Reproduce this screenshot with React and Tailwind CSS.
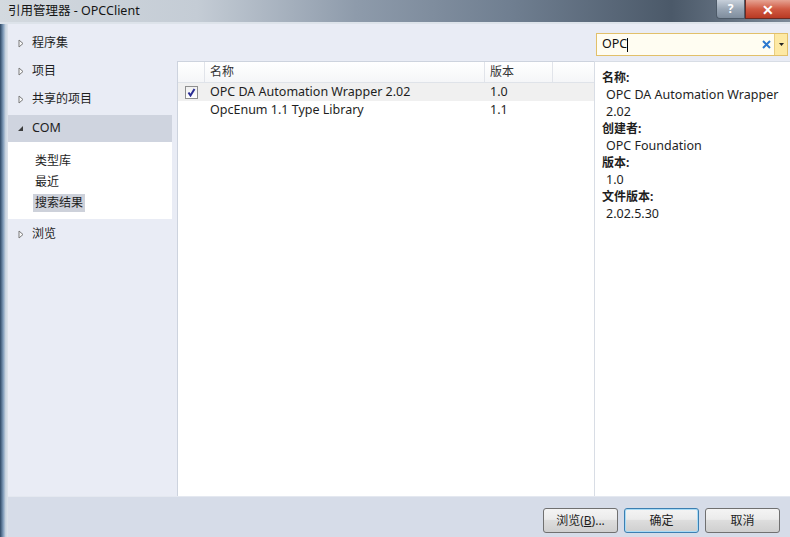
import React from 'react';

const font = "font-['Noto_Sans','Noto_Sans_CJK_SC',sans-serif]";

function Arrow() {
  return (
    <svg width="6" height="9" viewBox="0 0 6 9" className="shrink-0">
      <path d="M1 1 L5 4.5 L1 8 Z" fill="#fafafa" stroke="#7a7a7a" strokeWidth="1" />
    </svg>
  );
}

function NavItem({ label }) {
  return (
    <div className="h-[28px] flex items-center gap-[8px] pl-[10px] text-[12px] text-[#1e1e1e]">
      <Arrow />
      <span>{label}</span>
    </div>
  );
}

function Btn({ children, primary }) {
  return (
    <button
      className={`w-[75px] h-[25px] rounded-[3px] border text-[12px] text-[#1e1e1e] bg-[linear-gradient(#f4f4f4,#ebebeb_45%,#dddddd_50%,#cfcfcf)] ${primary ? 'border-[#3c7fb1] shadow-[inset_0_0_0_1px_#a8dbf6]' : 'border-[#707070]'}`}
    >
      {children}
    </button>
  );
}

export default function App() {
  const details = [
    ['名称:', ['OPC DA Automation Wrapper', '2.02']],
    ['创建者:', ['OPC Foundation']],
    ['版本:', ['1.0']],
    ['文件版本:', ['2.02.5.30']],
  ];

  return (
    <div className={`w-[790px] h-[537px] flex flex-col overflow-hidden ${font}`}>
      {/* title bar */}
      <div className="h-[22px] shrink-0 flex items-start bg-[linear-gradient(90deg,#d3d9df_0%,#c4ccd5_25%,#8e9bab_45%,#6f7e90_65%,#4b5969_85%,#7d8a99_100%)]">
        <span className="pl-[8px] pt-[2px] text-[12.5px] text-[#151515]">引用管理器 - OPCClient</span>
        <div className="ml-auto flex h-[19px]">
          <div className="w-[29px] flex items-center justify-center rounded-bl-[4px] border border-t-0 border-[#4d5a68] bg-[linear-gradient(#c7d0da,#9aa7b6_50%,#7f8d9d)] text-[12px] font-bold text-white">?</div>
          <div className="w-[45px] flex items-center justify-center border border-t-0 border-r-0 border-[#6b2a22] bg-[linear-gradient(#e6a393,#d05a43_50%,#b93a24)] text-[14px] font-bold text-white">✕</div>
        </div>
      </div>
      <div className="h-[2px] shrink-0 bg-[#dde3ea]" />

      <div className="flex-1 flex min-h-0">
        {/* left frame */}
        <div className="w-[8px] shrink-0 bg-[linear-gradient(90deg,#2e4865,#7f9bb9_40%,#c9d4e0_70%,#dfe4ec)]" />

        <div className="flex-1 flex flex-col min-w-0">
          <div className="flex-1 flex min-h-0 bg-[#e9ecf5]">
            {/* nav */}
            <div className="w-[164px] shrink-0 pt-[5px]">
              <NavItem label="程序集" />
              <NavItem label="项目" />
              <NavItem label="共享的项目" />
              <div className="mt-[2px] h-[27px] flex items-center gap-[8px] pl-[9px] bg-[#cfd4df] text-[12px] text-[#1e1e1e]">
                <svg width="7" height="7" viewBox="0 0 7 7" className="shrink-0">
                  <path d="M6 1 L6 6 L1 6 Z" fill="#3c3c3c" />
                </svg>
                <span className="text-[12.5px]">COM</span>
              </div>
              <div className="bg-white pt-[8px] pb-[6px] pl-[25px] text-[12px] text-[#1e1e1e]">
                <div className="h-[21px] flex items-center"><span className="px-[2px]">类型库</span></div>
                <div className="h-[21px] flex items-center"><span className="px-[2px]">最近</span></div>
                <div className="h-[21px] flex items-center"><span className="px-[2px] bg-[#cdd1da] leading-[18px]">搜索结果</span></div>
              </div>
              <div className="pt-[1px]">
                <NavItem label="浏览" />
              </div>
            </div>

            <div className="w-[5px] shrink-0" />

            {/* right area */}
            <div className="flex-1 flex flex-col min-w-0">
              <div className="h-[37px] shrink-0 flex items-start justify-end pt-[9px] pr-[2px]">
                <div className="w-[192px] h-[23px] flex border border-[#e2c06a] bg-[#fffdf2]">
                  <div className="flex-1 flex items-center pl-[5px] text-[12.5px] text-[#111]">
                    OPC<span className="w-px h-[14px] bg-black" />
                  </div>
                  <div className="w-[16px] flex items-center justify-center">
                    <svg width="9" height="9" viewBox="0 0 9 9">
                      <path d="M1 1 L8 8 M8 1 L1 8" stroke="#2c78cf" strokeWidth="2" />
                    </svg>
                  </div>
                  <div className="w-[13px] flex items-center justify-center border-l border-[#e8cd82] bg-[#fde9a4]">
                    <svg width="5" height="3" viewBox="0 0 5 3">
                      <path d="M0 0 L5 0 L2.5 3 Z" fill="#222" />
                    </svg>
                  </div>
                </div>
              </div>

              <div className="flex-1 flex min-h-0">
                {/* results list */}
                <div className="w-[417px] shrink-0 bg-white border-l border-t border-[#cdd3de]">
                  <div className="h-[21px] flex text-[12px] text-[#333] bg-[linear-gradient(#ffffff,#f5f6f8)] border-b border-[#dfe3e9]">
                    <div className="w-[27px] border-r border-[#e1e4ea]" />
                    <div className="w-[280px] pl-[5px] flex items-center border-r border-[#e1e4ea]">名称</div>
                    <div className="w-[68px] pl-[5px] flex items-center border-r border-[#e1e4ea]">版本</div>
                    <div className="flex-1" />
                  </div>
                  <div className="h-[18px] flex items-center bg-[#f0f0f0] text-[12.5px] text-[#1e1e1e]">
                    <div className="w-[27px] flex justify-center">
                      <div className="w-[13px] h-[13px] border border-[#8e8f8f] bg-[linear-gradient(#f0f0f0,#ffffff)] flex items-center justify-center">
                        <svg width="9" height="9" viewBox="0 0 9 9">
                          <path d="M1.5 4.5 L3.5 7.5 L7.5 1" fill="none" stroke="#2a2d94" strokeWidth="2" />
                        </svg>
                      </div>
                    </div>
                    <div className="w-[280px] pl-[5px] pt-[1px]">OPC DA Automation Wrapper 2.02</div>
                    <div className="pl-[5px] pt-[1px]">1.0</div>
                  </div>
                  <div className="h-[18px] flex items-center text-[12.5px] text-[#1e1e1e]">
                    <div className="w-[27px]" />
                    <div className="w-[280px] pl-[5px] pt-[1px]">OpcEnum 1.1 Type Library</div>
                    <div className="pl-[5px] pt-[1px]">1.1</div>
                  </div>
                </div>

                {/* details */}
                <div className="flex-1 bg-white border-l border-t border-[#d8dde5] pt-[7px] pl-[7px] text-[12px] leading-[17px] text-[#1e1e1e]">
                  {details.map(([label, values]) => (
                    <div key={label}>
                      <div className="font-bold">{label}</div>
                      {values.map(v => (
                        <div key={v} className="pl-[4px] text-[12.5px]">{v}</div>
                      ))}
                    </div>
                  ))}
                </div>
              </div>
            </div>
          </div>

          {/* bottom bar */}
          <div className="h-[41px] shrink-0 flex items-start justify-end gap-[6px] pt-[11px] pr-[10px] bg-[#d6dce8] border-t border-[#e4e8f0]">
            <Btn>浏览(<span className="underline">B</span>)...</Btn>
            <Btn primary>确定</Btn>
            <Btn>取消</Btn>
          </div>
        </div>
      </div>
    </div>
  );
}
